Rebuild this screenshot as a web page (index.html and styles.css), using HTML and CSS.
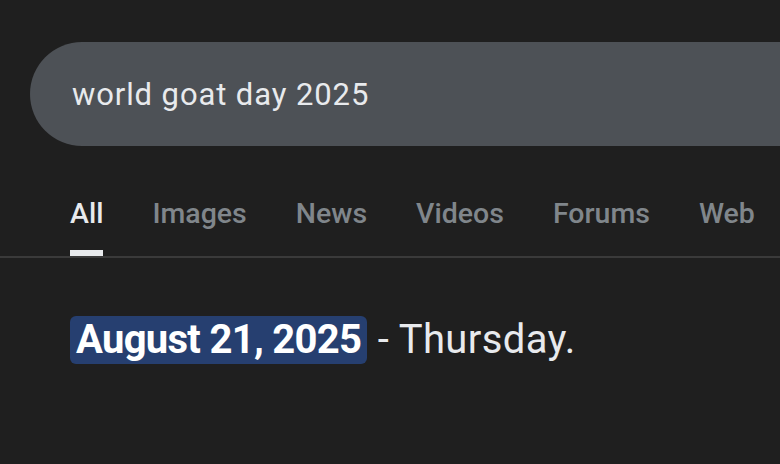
FILE: index.html
```html
<!DOCTYPE html>
<html lang="en">
<head>
<meta charset="utf-8">
<link rel="stylesheet" href="styles.css">
</head>
<body>
<div class="page">
  <div class="search">
    <span class="query">world goat day 2025</span>
  </div>
  <nav class="tabs">
    <span class="tab active">All</span>
    <span class="tab">Images</span>
    <span class="tab">News</span>
    <span class="tab">Videos</span>
    <span class="tab">Forums</span>
    <span class="tab">Web</span>
  </nav>
  <div class="answer">
    <span class="hl">August 21, 2025</span><span class="rest"> - Thursday.</span>
  </div>
</div>
</body>
</html>
```
FILE: styles.css
```css
html, body {
  margin: 0;
  padding: 0;
  background: #1f1f1f;
  overflow: hidden;
}
.page {
  width: 780px;
  height: 464px;
  font-family: Roboto, "Noto Sans", sans-serif;
  padding-top: 42px;
  box-sizing: border-box;
  overflow: hidden;
}
.search {
  margin-left: 30px;
  width: 750px;
  height: 104px;
  background: #4d5156;
  border-radius: 52px 0 0 52px;
  display: flex;
  align-items: center;
  padding-left: 42px;
  box-sizing: border-box;
}
.query {
  color: #e8eaed;
  font-size: 31px;
  letter-spacing: 0.9px;
}
.tabs {
  display: flex;
  align-items: flex-end;
  gap: 49px;
  padding-left: 70px;
  height: 112px;
  border-bottom: 2px solid #3a3a3a;
  box-sizing: border-box;
  white-space: nowrap;
}
.tab {
  color: #80868b;
  font-size: 28.5px;
  font-weight: 500;
  line-height: 29px;
  padding-bottom: 22px;
  border-bottom: 6px solid transparent;
}
.tab.active {
  color: #e8eaed;
  border-bottom-color: #e8eaed;
}
.answer {
  margin-top: 58px;
  padding-left: 70px;
  display: flex;
  align-items: center;
  white-space: pre;
}
.hl {
  background: #263f70;
  color: #ffffff;
  font-weight: 700;
  font-size: 40px;
  letter-spacing: -0.7px;
  padding: 2px 6px;
  border-radius: 6px;
  line-height: 44px;
}
.rest {
  color: #e8eaed;
  font-size: 40px;
  letter-spacing: 0.4px;
  line-height: 44px;
}
```
